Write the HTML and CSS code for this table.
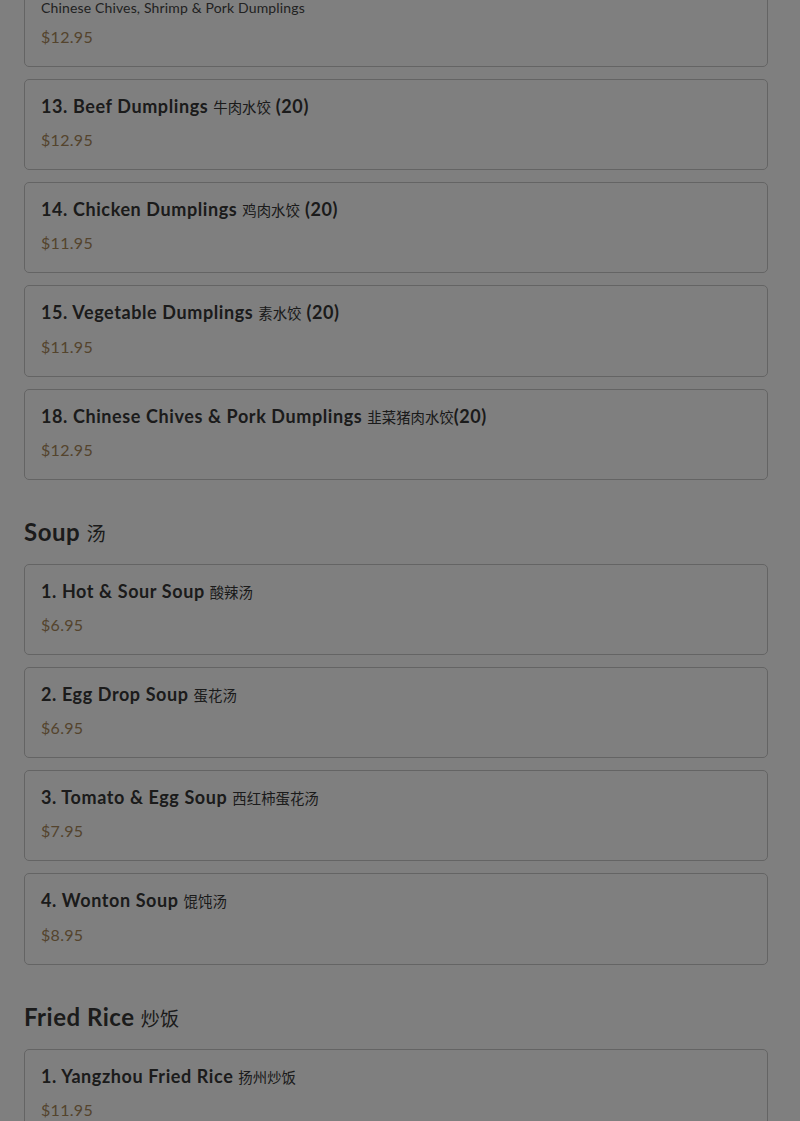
FILE: index.html
```html
<!DOCTYPE html>
<html lang="en">
<head>
<meta charset="utf-8">
<title>Menu</title>
<link rel="stylesheet" href="styles.css">
</head>
<body>
<main class="menu">
  <section class="section section-first">
    <article class="item">
      <p class="item-desc">Chinese Chives, Shrimp &amp; Pork Dumplings</p>
      <p class="item-price">$12.95</p>
    </article>
    <article class="item">
      <h3 class="item-title">13. Beef Dumplings <span class="zh">牛肉水饺</span> (20)</h3>
      <p class="item-price">$12.95</p>
    </article>
    <article class="item">
      <h3 class="item-title">14. Chicken Dumplings <span class="zh">鸡肉水饺</span> (20)</h3>
      <p class="item-price">$11.95</p>
    </article>
    <article class="item">
      <h3 class="item-title">15. Vegetable Dumplings <span class="zh">素水饺</span> (20)</h3>
      <p class="item-price">$11.95</p>
    </article>
    <article class="item">
      <h3 class="item-title">18. Chinese Chives &amp; Pork Dumplings <span class="zh">韭菜猪肉水饺</span>(20)</h3>
      <p class="item-price">$12.95</p>
    </article>
  </section>

  <section class="section">
    <h2 class="section-title">Soup <span class="zh">汤</span></h2>
    <article class="item">
      <h3 class="item-title">1. Hot &amp; Sour Soup <span class="zh">酸辣汤</span></h3>
      <p class="item-price">$6.95</p>
    </article>
    <article class="item">
      <h3 class="item-title">2. Egg Drop Soup <span class="zh">蛋花汤</span></h3>
      <p class="item-price">$6.95</p>
    </article>
    <article class="item">
      <h3 class="item-title">3. Tomato &amp; Egg Soup <span class="zh">西红柿蛋花汤</span></h3>
      <p class="item-price">$7.95</p>
    </article>
    <article class="item">
      <h3 class="item-title">4. Wonton Soup <span class="zh">馄饨汤</span></h3>
      <p class="item-price">$8.95</p>
    </article>
  </section>

  <section class="section">
    <h2 class="section-title">Fried Rice <span class="zh">炒饭</span></h2>
    <article class="item">
      <h3 class="item-title">1. Yangzhou Fried Rice <span class="zh">扬州炒饭</span></h3>
      <p class="item-price">$11.95</p>
    </article>
  </section>
</main>
<div class="overlay"></div>
</body>
</html>
```

FILE: styles.css
```css
html, body {
  margin: 0;
  padding: 0;
  background: #ffffff;
}

body {
  font-family: "Lato", "Noto Sans", "Noto Sans CJK SC", sans-serif;
  color: #363636;
  overflow: hidden;
}

.menu {
  padding: 0 32px 0 24px;
  margin-top: -20px;
}

.section-title {
  margin: 36px 0 16px;
  font-size: 24px;
  line-height: 32px;
  font-weight: 700;
  letter-spacing: 0.5px;
  color: #363636;
}

.item {
  border: 1px solid #c8c8c8;
  border-radius: 5px;
  padding: 16px;
  margin-bottom: 12px;
  background: #ffffff;
}

.item-title {
  margin: -1px 0 8px;
  font-size: 18px;
  line-height: 22px;
  padding-bottom: 4.2px;
  font-weight: 700;
  letter-spacing: 0.6px;
  color: #363636;
}

.item-desc {
  margin: 0 0 8px;
  font-size: 14px;
  line-height: 21px;
  letter-spacing: 0.15px;
  color: #444444;
}

.item-price {
  margin: 0;
  font-size: 16px;
  line-height: 22px;
  padding-bottom: 2px;
  letter-spacing: 0.3px;
  color: #a8885a;
}

.zh {
  font-family: "Noto Sans CJK SC", sans-serif;
  font-weight: 400;
  font-size: 0.8em;
  line-height: 1;
  letter-spacing: 0;
}

.overlay {
  position: fixed;
  inset: 0;
  background: rgba(0, 0, 0, 0.5);
}
```
